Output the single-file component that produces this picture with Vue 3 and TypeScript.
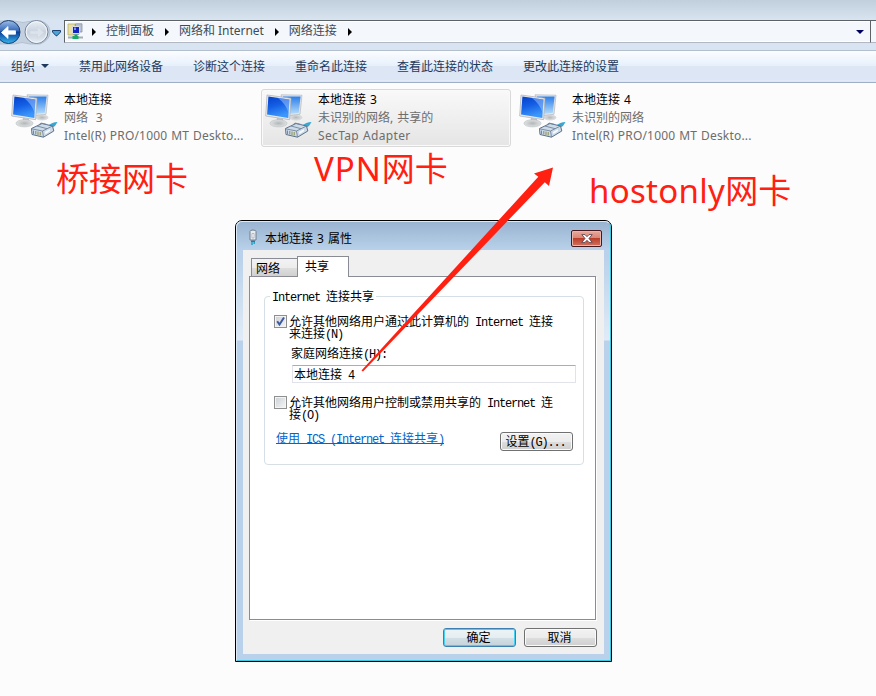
<script setup lang="ts">
import { h, type FunctionalComponent } from 'vue'

interface Connection {
  name: string
  status: string
  device: string
  selected?: boolean
}

const crumbs: string[] = ['控制面板', '网络和 Internet', '网络连接']
const commands: string[] = ['禁用此网络设备', '诊断这个连接', '重命名此连接', '查看此连接的状态', '更改此连接的设置']
const connections: Connection[] = [
  { name: '本地连接', status: '网络\u00a0 3', device: 'Intel(R) PRO/1000 MT Deskto...' },
  { name: '本地连接 3', status: '未识别的网络, 共享的', device: 'SecTap Adapter', selected: true },
  { name: '本地连接 4', status: '未识别的网络', device: 'Intel(R) PRO/1000 MT Deskto...' },
]

// Latin runs take half the advance of a CJK character, as in a bitmap dialog font.
const GridText: FunctionalComponent<{ text: string }> = (props) =>
  h(
    'span',
    { class: 'grid-text' },
    props.text
      .split(/([\x20-\x7e]+)/)
      .filter(Boolean)
      .map((run) => (/^[\x20-\x7e]/.test(run) ? h('span', { class: 'half' }, run) : run)),
  )
GridText.props = ['text']
</script>

<template>
  <div class="screen">
    <div class="titlebar"></div>
    <div class="navbar">
      <svg class="nav-buttons" width="64" height="30" viewBox="0 0 64 30">
        <defs>
          <linearGradient id="back" x1="0" y1="0" x2="0" y2="1">
            <stop offset="0" stop-color="#9bbde8" />
            <stop offset=".45" stop-color="#3668b8" />
            <stop offset=".5" stop-color="#0b3c94" />
            <stop offset="1" stop-color="#35b8f0" />
          </linearGradient>
          <linearGradient id="fwd" x1="0" y1="0" x2="0" y2="1">
            <stop offset="0" stop-color="#e9eff6" />
            <stop offset=".5" stop-color="#c8d2de" />
            <stop offset="1" stop-color="#e6edf5" />
          </linearGradient>
        </defs>
        <path d="M0 1H14Q23 4 32 1H41Q50 4 50 12T40 24H30Q22 21 14 24H0Z" fill="#c3d0df" stroke="#b3c0d1" />
        <circle cx="8.5" cy="12" r="11.5" fill="url(#back)" stroke="#1f3c70" />
        <path d="M1.5 12.5L8 6.5V10.8H15.5V14.2H8V18.5Z" fill="#fff" stroke="#fff" stroke-width=".8" />
        <circle cx="36.5" cy="12" r="11.5" fill="url(#fwd)" stroke="#77859a" />
        <circle cx="36.5" cy="12" r="10.3" fill="none" stroke="#f3f7fb" />
        <path d="M44 12.5L37.5 6.5V10.8H30V14.2H37.5V18.5Z" fill="#dde3ea" stroke="#ccd4dc" stroke-width=".5" />
        <path d="M52.5 10.5H60.5V12L57 15.8H56L52.5 12Z" fill="#4ba3d6" stroke="#1c4272" />
      </svg>
      <div class="address">
        <svg class="net-icon" width="17" height="17" viewBox="0 0 17 17">
          <path d="M1 1H8V12H1Z" fill="#e9dfa0" stroke="#b8ad6a" stroke-width=".8" />
          <path d="M8.5 .8H15V9H8.5Z" fill="#b8c1cf" stroke="#8992a0" stroke-width=".8" />
          <path d="M5.5 3.5H12.5V10.5H5.5Z" fill="#1426bd" stroke="#d8dde5" />
          <path d="M7 4.5H9V7H7Z" fill="#7893f3" />
          <path d="M6 11H12V12H6Z" fill="#99a1ab" />
          <path d="M1 14.5H16" stroke="#a4adb5" stroke-width="2" />
          <path d="M9 11.5V13M5.5 14.5H11.5" stroke="#18a967" stroke-width="3" />
        </svg>
        <template v-for="c in crumbs" :key="c">
          <i class="tri-right"></i>
          <span class="crumb">{{ c }}</span>
        </template>
        <i class="tri-right"></i>
        <i class="tri-down drop"></i>
      </div>
      <div class="search"></div>
    </div>
    <div class="toolbar">
      <span class="command organize">组织<i class="tri-down"></i></span>
      <span v-for="c in commands" :key="c" class="command">{{ c }}</span>
    </div>
    <svg class="defs" width="0" height="0">
      <defs>
        <linearGradient id="scr" x1="0" y1="0" x2=".3" y2="1">
          <stop offset="0" stop-color="#0440c8" />
          <stop offset=".5" stop-color="#1560e6" />
          <stop offset="1" stop-color="#3d97fa" />
        </linearGradient>
        <linearGradient id="scr2" x1="0" y1="0" x2="0" y2="1">
          <stop offset="0" stop-color="#2a7dea" />
          <stop offset="1" stop-color="#b5dcfb" />
        </linearGradient>
        <radialGradient id="foot">
          <stop offset="0" stop-color="#b4b7b9" />
          <stop offset="1" stop-color="#dfe1e2" />
        </radialGradient>
      </defs>
    </svg>
    <div class="connections">
      <div v-for="c in connections" :key="c.name" class="connection" :class="{ selected: c.selected }">
        <svg class="conn-icon" width="48" height="50" viewBox="0 0 48 50">
          <ellipse cx="32" cy="25.5" rx="6" ry="2.6" fill="url(#foot)" stroke="#c5c8ca" stroke-width=".5" />
          <path d="M17 2.8L38 3.2L36 22.3L22 24Z" fill="#e1e5e8" stroke="#b2b8bd" stroke-width=".7" />
          <path d="M19 4.4L36.6 4.6L34.8 20.8L24 22.2Z" fill="url(#scr2)" />
          <path d="M13 26L19 27V31H12Z" fill="#b9bdc0" />
          <ellipse cx="14.5" cy="31.3" rx="8.5" ry="3.6" fill="url(#foot)" stroke="#b9bdbf" stroke-width=".6" />
          <path d="M3 3L27 6.2L25.6 27.7L1.7 24Z" fill="#e8ebed" stroke="#a9aeb2" stroke-width=".7" />
          <path d="M4.4 4.6L25.5 7.5L24.3 25.9L3.1 22.6Z" fill="url(#scr)" />
          <path d="M14 5.9L25.5 7.5L24.6 21Q22 12 14 5.9Z" fill="#b5d8ff" opacity=".45" />
          <path d="M38 34Q42 30 47.5 30L45 34L40 37Z" fill="#38a8d0" />
          <path d="M21.5 36.5L32 31.5L42.5 34L43.8 39L33.5 45.2L22 42.5Z" fill="#cddbe9" stroke="#5d7189" stroke-width="1" />
          <path d="M21.5 36.8L32.5 39L42.5 34M32.5 39L33.5 45M27 34L37 36.7M29 32.8L31 31L37 32.5" fill="none" stroke="#71859c" stroke-width=".9" />
          <path d="M35 40L40 37.2V39L35.5 42Z" fill="#f8fcff" />
          <path d="M23.5 38.5V42M25.8 39V42.5M28 39.5V43M30.2 40V43.5" stroke="#8a8d52" stroke-width="1" />
        </svg>
        <div class="conn-text">
          <span class="name">{{ c.name }}</span>
          <span>{{ c.status }}</span>
          <span class="device">{{ c.device }}</span>
        </div>
      </div>
    </div>

    <div class="dialog">
      <div class="frame">
        <div class="caption">
          <svg width="12" height="18" viewBox="0 0 12 18">
            <path d="M3 2.5Q3 1 6 1T9 2.5V11H3Z" fill="#e7edf2" stroke="#737e8a" />
            <path d="M5 4.5H7V9H5Z" fill="#fff" stroke="#9ba5af" stroke-width=".7" />
            <path d="M4 11.5H8V13H4Z" fill="#566b80" />
            <path d="M5 13V16M7.2 13V15" stroke="#1a9fc6" stroke-width="1.4" />
          </svg>
          <span class="caption-text">本地连接 3 属性</span>
          <button class="close" aria-label="关闭">
            <svg width="12" height="9" viewBox="0 0 12 9">
              <path d="M.8 .6H4L6 2.7L8 .6H11.2L8 4.5L11.2 8.4H8L6 6.3L4 8.4H.8L4 4.5Z" fill="#fff" stroke="#5a4650" stroke-width=".9" />
            </svg>
          </button>
        </div>
        <div class="client">
          <div class="tabs">
            <div class="tab"><GridText text="网络" /></div>
            <div class="tab active"><GridText text="共享" /></div>
          </div>
          <div class="page">
            <fieldset class="group">
              <legend><GridText text="Internet 连接共享" /></legend>
              <div class="check-row">
                <span class="box">
                  <svg width="11" height="11" viewBox="0 0 11 11">
                    <path d="M2.2 5.2L4.5 8.5L9 1.5" fill="none" stroke="#3c5aa0" stroke-width="2" />
                  </svg>
                </span>
                <div class="check-label">
                  <GridText text="允许其他网络用户通过此计算机的 Internet 连接" />
                  <GridText text="来连接(N)" />
                </div>
              </div>
              <div class="home-label"><GridText text="家庭网络连接(H):" /></div>
              <div class="field"><GridText text="本地连接 4" /></div>
              <div class="check-row second">
                <span class="box"></span>
                <div class="check-label">
                  <GridText text="允许其他网络用户控制或禁用共享的 Internet 连" />
                  <GridText text="接(O)" />
                </div>
              </div>
              <div class="link-row">
                <a class="link"><GridText text="使用 ICS (Internet 连接共享)" /></a>
                <button class="btn"><GridText text="设置(G)..." /></button>
              </div>
            </fieldset>
          </div>
          <div class="actions">
            <button class="btn primary"><GridText text="确定" /></button>
            <button class="btn"><GridText text="取消" /></button>
          </div>
        </div>
      </div>
    </div>

    <svg class="arrow" width="876" height="696" viewBox="0 0 876 696">
      <path d="M361.5 370.5L538.3 176.8L534 173.5L553 167.5L549 186L544.8 182.3L363 371.5Z" fill="#ff2012" />
    </svg>
    <div class="note bridge">桥接网卡</div>
    <div class="note vpn"><span>VPN</span>网卡</div>
    <div class="note host"><span>hostonly</span>网卡</div>
  </div>
</template>

<style>
body {
  margin: 0;
  background: #fcfcfc;
}
.grid-text {
  font: 12px/12px 'Noto Sans CJK SC', sans-serif;
  white-space: pre;
}
.grid-text .half {
  font-family: 'Liberation Mono', monospace;
  letter-spacing: -1.2px;
}
</style>

<style scoped>
.screen {
  position: relative;
  width: 876px;
  height: 696px;
  overflow: hidden;
  background: #fcfcfc;
  font: 12px/18px 'Noto Sans', 'Noto Sans CJK SC', sans-serif;
}
.screen * {
  box-sizing: border-box;
}
.titlebar {
  height: 20px;
  background: linear-gradient(#c1cedb, #d8e5f1);
}
.navbar {
  display: flex;
  height: 30px;
  background: #d8e4f1;
}
.nav-buttons {
  flex: none;
}
.address {
  flex: none;
  display: flex;
  align-items: center;
  width: 806px;
  height: 23px;
  border: 1px solid #5d6267;
  border-bottom-color: #b2b8c1;
  border-right: 0;
  background: #f4f8fc;
  box-shadow: inset 1px 1px #fff, inset 0 -1px #fff;
  color: #414b57;
  line-height: 20px;
}
.net-icon {
  margin: 0 8px 0 2px;
}
.crumb {
  margin: 0 11px 0 10px;
  padding-bottom: 1px;
  white-space: nowrap;
  letter-spacing: -0.02px;
}
.tri-right {
  border: 4px solid transparent;
  border-left: 4px solid #000;
  border-right: 0;
}
.tri-down {
  border: 4px solid transparent;
  border-top: 4px solid #1e395b;
  border-bottom: 0;
}
.drop {
  margin: 0 6px 0 auto;
  border-top-color: #000060;
}
.search {
  flex: 1;
  height: 23px;
  border: 1px solid #5d6267;
  border-bottom-color: #b2b8c1;
  border-right: 0;
  background: #f4f8fc;
}
.toolbar {
  display: flex;
  gap: 30px;
  align-items: center;
  height: 33px;
  padding-left: 11px;
  border-top: 1px solid #b4bfcd;
  border-bottom: 1px solid #a0afc8;
  background: linear-gradient(#fcfdff, #e6f0fb 15px, #dce6f4 15px, #dce6f4 29px, #e6edf8 30px, #d5dfef);
  color: #1e395b;
}
.command {
  display: flex;
  align-items: center;
}
.organize {
  gap: 6px;
}
.organize .tri-down {
  margin-bottom: 1px;
}
.defs {
  display: block;
}
.connections {
  display: flex;
  gap: 4px;
  padding: 6px 7px 0;
}
.connection {
  display: flex;
  width: 250px;
  height: 58px;
  padding: 1px 2px 0;
  border: 1px solid transparent;
  border-radius: 3px;
}
.connection.selected {
  border-color: #d9d9d9;
  background: linear-gradient(#f9f9f9, #e5e5e5);
  box-shadow: inset 0 0 0 1px #fafafa;
}
.conn-icon {
  flex: none;
  margin: 1px 6px 0 0;
}
.conn-text {
  display: flex;
  flex-direction: column;
  color: #6d6d6d;
  white-space: nowrap;
  word-spacing: 0.8px;
}
.name {
  color: #000;
}
.device {
  letter-spacing: 0.2px;
  word-spacing: 0.5px;
}
.selected .device {
  letter-spacing: 0.35px;
}
.dialog {
  position: absolute;
  left: 235px;
  top: 220px;
  width: 377px;
  height: 442px;
  border: 1px solid #000;
  border-radius: 7px 7px 0 0;
  background: #b9d1ea;
}
.frame {
  height: 440px;
  padding: 0 6px;
  border: 1px solid #37cbe2;
  border-top-color: #dce9f6;
  border-left-color: #dce9f6;
  border-radius: 6px 6px 0 0;
  background: linear-gradient(#99b4d1, #b9d1ea 28px, #b9d1ea 34px, #e0ebf7 118px, #b9d1ea 119px);
}
.caption {
  display: flex;
  height: 28px;
  padding: 7px 2px 0 4px;
}
.caption-text {
  margin: 0 auto 0 6px;
  line-height: 19px;
  word-spacing: 1px;
}
.close {
  display: flex;
  align-items: center;
  justify-content: center;
  width: 31px;
  height: 17px;
  margin-top: 1px;
  padding: 0;
  border: 1px solid #47181c;
  border-radius: 2px;
  background: linear-gradient(#e8a99d, #d98577 7px, #bb3b26 7px, #d0725f);
  box-shadow: inset 0 0 0 1px #eab5ab;
}
.client {
  display: flex;
  flex-direction: column;
  height: 404px;
  padding: 6px 7px 0 6px;
  background: #f0f0f0;
}
.tabs {
  display: flex;
  align-items: flex-end;
  height: 21px;
  padding-left: 2px;
}
.tab {
  width: 46px;
  height: 19px;
  padding: 3px 0 0 4px;
  border: 1px solid #898c95;
  border-right: 0;
  background: linear-gradient(#f3f3f3, #ececec 9px, #dedede 9px, #d0d0d0);
  line-height: 14px;
}
.tab.active {
  position: relative;
  width: 52px;
  height: 21px;
  padding-left: 7px;
  border-right: 1px solid #898c95;
  border-bottom: 0;
  background: #fff;
}
.page {
  width: 347px;
  height: 344px;
  margin-top: -1px;
  padding: 12px 0 0 14px;
  border: 1px solid #898c95;
  background: #fff;
  box-shadow: 1px 1px #fff;
}
.group {
  width: 320px;
  height: 176px;
  margin: 0;
  padding: 0;
  border: 1px solid #d5dfe5;
  border-radius: 4px;
}
.group legend {
  height: 14px;
  margin-left: 5px;
  padding: 1px 2px 0;
  line-height: 14px;
}
.check-row {
  display: flex;
  gap: 2px;
  height: 25px;
  margin: 12px 0 0 9px;
}
.check-row.second {
  margin-top: 13px;
}
.box {
  width: 13px;
  height: 13px;
  border: 1px solid #8e8f8f;
  background: linear-gradient(135deg, #cbcfd5, #f6f6f6);
  box-shadow: inset 0 0 0 1px #f4f4f4;
}
.box svg {
  display: block;
}
.check-label {
  display: grid;
  grid-template-rows: 12px 12px;
  white-space: nowrap;
}
.home-label {
  height: 16px;
  margin: 6px 0 0 26px;
  line-height: 16px;
}
.field {
  width: 284px;
  height: 18px;
  margin: 3px 0 0 27px;
  padding-left: 1px;
  border: 1px solid #e2e3ea;
  border-top-color: #abadb3;
  line-height: 17px;
}
.link-row {
  display: flex;
  justify-content: space-between;
  margin: 11px 10px 0 11px;
}
.link {
  height: 12px;
  border-bottom: 1px solid #0066cc;
  color: #0066cc;
  line-height: 10px;
}
.btn {
  width: 73px;
  height: 19px;
  padding: 0 2px 0 0;
  border: 1px solid #707070;
  border-radius: 3px;
  background: linear-gradient(#f2f2f2, #ebebeb 9px, #dddddd 9px, #cfcfcf);
  box-shadow: inset 0 0 0 1px #fafafa;
  color: #000;
  line-height: 15px;
}
.btn.primary {
  border-color: #3c7fb1;
  background: linear-gradient(#eef4f7, #e4edf1 9px, #d3dfe5 9px, #c3d3da);
  box-shadow: inset 0 0 0 1px #46d0f2;
}
.actions {
  display: flex;
  justify-content: flex-end;
  gap: 8px;
  margin-top: 8px;
}
.arrow {
  position: absolute;
  left: 0;
  top: 0;
}
.note {
  position: absolute;
  color: #ff2012;
  font: 33px/40px 'Noto Sans CJK SC', sans-serif;
  white-space: nowrap;
}
.note span {
  font-family: 'Noto Sans', sans-serif;
  letter-spacing: 0.3px;
}
.bridge {
  left: 56px;
  top: 157px;
}
.vpn {
  left: 314px;
  top: 147px;
}
.vpn span {
  letter-spacing: 1px;
}
.host {
  left: 589px;
  top: 169px;
}
</style>
